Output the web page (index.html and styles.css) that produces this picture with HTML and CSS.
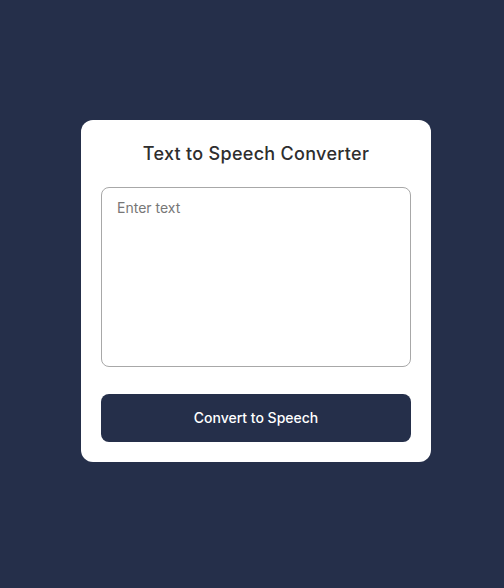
FILE: index.html
```html
<!DOCTYPE html>
<html lang="en">
<head>
<meta charset="UTF-8">
<title>Text to Speech Converter</title>
<link rel="stylesheet" href="styles.css">
</head>
<body>
<main class="page">
  <section class="card">
    <h1 class="title">Text to Speech Converter</h1>
    <textarea class="input" placeholder="Enter text"></textarea>
    <button class="btn" type="button">Convert to Speech</button>
  </section>
</main>
</body>
</html>
```
FILE: styles.css
```css
* { box-sizing: border-box; }
html, body { margin: 0; padding: 0; }
body {
  background: #252f4a;
  font-family: "Inter", "Open Sans", sans-serif;
}
.page {
  height: 588px;
  display: flex;
  justify-content: center;
  align-items: flex-start;
  padding-top: 120px;
  padding-left: 8px;
}
.card {
  width: 350px;
  background: #ffffff;
  border-radius: 12px;
  padding: 22px 20px 20px;
  display: flex;
  flex-direction: column;
}
.title {
  margin: 0;
  text-align: center;
  font-size: 18px;
  font-weight: 500;
  color: #2e2e2e;
  line-height: 24px;
  letter-spacing: 0.3px;
}
.input {
  margin-top: 21px;
  height: 180px;
  width: 100%;
  border: 1px solid #a8a8a8;
  border-radius: 8px;
  padding: 11px 15px;
  font-family: inherit;
  font-size: 14px;
  resize: none;
  outline: none;
}
.input::placeholder { color: #777777; }
.btn {
  margin-top: 27px;
  height: 48px;
  width: 100%;
  border: none;
  border-radius: 8px;
  background: #252f4a;
  color: #ffffff;
  font-family: inherit;
  font-size: 14px;
  font-weight: 500;
  padding: 0 0 2px;
}
```
